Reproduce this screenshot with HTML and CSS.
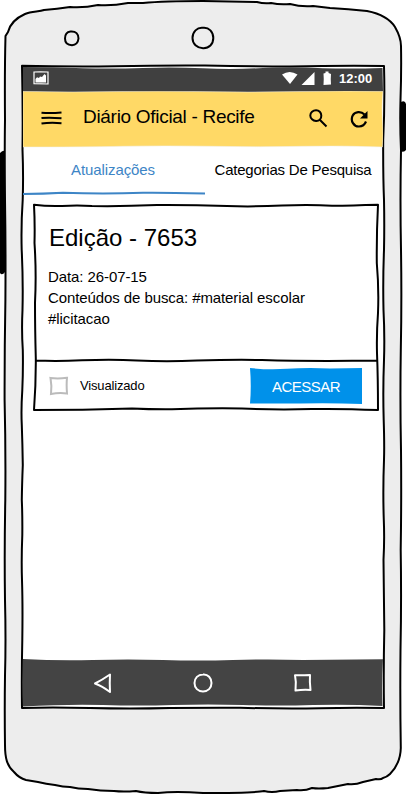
FILE: index.html
```html
<!DOCTYPE html>
<html lang="pt-BR">
<head>
<meta charset="utf-8">
<title>Diário Oficial - Recife</title>
<link rel="stylesheet" href="styles.css">
</head>
<body>
<div class="phone">
  <svg class="art" width="406" height="794" viewBox="0 0 406 794" aria-hidden="true">
    <path d="M0 153Q3 150 5 151V272Q2 276 0 273Z"/>
    <path d="M399 103Q405 99 406 104V150Q404 153 400 151Z"/>
    <path class="body" d="M5.500 36L8 32C10 24 16 18 25 14C32 11 39 12 44 10Q57 9 70 7Q84 8 98 5Q112 6 128 3L143 3Q164 1 203 1L257 2Q264 4 271 3Q280 5 290 4Q301 7 313 6L330 8Q348 9 367 11C382 14 390 19 395 27C399 34 401 39 401 46Q401.500 70 400.500 100Q399.800 125 401 150Q400 200 401 250Q401.800 300 400.800 350Q400 400 401 450Q401.500 500 400.700 550Q401.500 600 400.500 650Q400 700 400.800 748C400.500 761 396 768 390 774Q387 777 383 778Q381 780 376 779L363 782Q355 785 348 784L328 788Q318 789 312 788Q305 791 297 790L280 791Q272 793 264 791Q255 793 203 793Q175 791 158 793Q144 793 136 791Q123 792 114 791Q100 791 88 789Q78 789 70 787Q63 787 55 785Q46 784 38 782L26 780Q19 778 14 772C7 766 5 758 5 745Q4.500 710 5 676Q6 640 5 600Q4.300 550 5.300 500Q5.800 450 4.600 400Q4.500 350 5.400 300Q5.800 250 5 200Q4.500 150 5 120Q4.600 70 5.500 36Z"/>
    <path class="ring" d="M70.500 31.500C76 31 78.500 34 78.500 38.500C78 43 76 45 72 45.200C67 45 65 43 65 38.500C65 35 66.500 32 70.500 31.500Z"/>
    <path class="ring" d="M203 27.700C209 27 213.300 32 213.300 38S209 48.500 203 48.200S192.500 44 192.500 38S197 27 203 27.700Z"/>
    <path class="glass" d="M22 65.800Q65 66.800 115 66.300Q160 65.200 205 65.500Q250 66.500 290 66.500Q340 65.500 384 66Q385 103 383.200 140Q383 175 384 200Q384.500 225 384 250Q382.800 280 383.500 310Q384.800 335 384 360Q382.800 390 383.700 420Q384.500 445 384 460Q382.800 490 383.800 520Q384.600 540 383.500 560Q384 600 384.300 630Q383.400 670 384 708Q350 707.300 320 708.300Q280 709 240 707.700Q205 707.500 170 708Q130 709 90 708Q50 707 22 708Q21.500 675 22.300 640Q22.800 605 22 580Q21.300 560 22.300 535Q22.500 515 21.800 500Q22 485 22.800 465Q22.500 445 21.800 425Q21 410 22.300 390Q23.200 370 22.800 350Q21.500 330 22.500 310Q23.200 280 21.700 250Q21 225 22.700 200Q23.500 175 22.500 150Q23 110 22 65.800Z"/>
  </svg>
  <main class="screen">
    <div class="status">
      <svg class="edge" width="361" height="25" viewBox="0 0 361 25"><path fill="#404040" d="M0 0Q30 0 60 1.300Q90 2 120 1T180 1.300T240 1T300 1.300Q330 2 359.500 1L360 25H0Z"/></svg>
      <svg class="photo" width="16" height="14" viewBox="0 0 16 14"><path fill="none" stroke="#fff" stroke-width="1.200" d="M1 1Q7 .7 15 1V13L1 12.700Z"/><path fill="#fff" d="M2.500 11.500V8L4 6.300L6 7L7 5.500L9 6L11.500 3L13 4.500V11.500Z"/></svg>
      <svg class="signals" width="52" height="15" viewBox="0 0 52 15" fill="#fff"><path d="M0 3.500Q7.500-1.500 15.500 3.500L8 13Z"/><path d="M19.500 14L32.500 1V14Z"/><path d="M41.500 2.500L43.500 2V.500H46.500V2L49 3Q48.500 8 49 13.500L41.500 14Q42 8 41.500 2.500Z"/></svg>
      <span class="clock">12:00</span>
    </div>
    <header class="bar">
      <svg class="edge" width="360" height="57" viewBox="0 0 360 57"><path fill="#ffd966" stroke="#eee" stroke-width=".5" d="M0 .300Q45 1.500 90 .600T180 .600T270 .600T360 .300Q358.500 16 359.500 30T359.500 56Q320 54.500 280 55.300T190 55.300T100 55.300T0 56Z"/></svg>
      <svg class="menu" width="22" height="14" viewBox="0 0 22 14"><path d="M.500 1.800Q10 2.500 20.500 1.500M.500 7Q8 6.200 20.500 7.200M.500 12.600Q9 11.200 20.500 12.200"/></svg>
      <h1 class="title">Diário Oficial - Recife</h1>
      <svg class="search" width="19" height="19" viewBox="0 0 19 19"><path d="M12.300 6.500C12.500 10 10 12.200 7 12S1.300 9.500 1.300 6.500S4 1.300 7 1.200S12.300 3.500 12.300 6.500ZM11 11L17.500 17.500"/></svg>
      <svg class="reload" width="19" height="19" viewBox="0 0 19 19"><path fill="none" stroke="#000" stroke-width="2.200" d="M14.500 4.500C11 1 5 1.500 2.700 5.500C0 11 4 16.700 9 16.500Q14 16.500 16 11.500"/><path d="M17.500 1V8.500H10Z"/></svg>
    </header>
    <nav class="tabs">
      <a class="tab active">Atualizações<svg class="line" width="182" height="5" viewBox="0 0 182 5"><path d="M0 3Q20 2.800 40 1.700Q60 2.500 80 2.500Q100 2.500 120 1.800Q140 1.500 182 2.600"/></svg></a>
      <a class="tab second">Categorias De Pesquisa</a>
    </nav>
    <section class="card">
      <svg class="outline" width="349" height="210" viewBox="0 0 349 210"><path d="M2 1.700Q15 3.500 30 3Q45 2 60 3Q90 3.500 125 2Q160 1.800 195 3Q220 4 250 2.500Q280 1.500 300 2.800Q320 2.500 346 1.700Q344.500 30 344.800 60Q347 85 346 110Q344.500 130 345 150Q346 175 346 207Q310 205.500 280 206Q245 207 210 205.500Q175 205 140 206.300Q120 206.500 100 205.500Q50 207 2 207Q4 180 3.800 155Q3 125 3 100Q4.500 70 2.500 40Q3 20 2 1.700ZM3 157.500Q25 158.500 50 157.300Q80 156 105 157.500Q135 158.800 165 157.500Q200 156.500 230 157Q280 158.500 346 157.500"/></svg>
      <div class="content">
        <h2 class="heading">Edição - 7653</h2>
        <p class="text"><span class="date">Data: 26-07-15</span><br><span class="query">Conteúdos de busca: #material escolar</span><br><span class="tag">#licitacao</span></p>
      </div>
      <div class="actions">
        <svg class="check" width="20" height="20" viewBox="0 0 20 20"><path d="M1.500 2Q9 3 18 1.800Q17.300 8 18 17.500Q10 16.500 2 18Q3 10 1.500 2Z"/></svg>
        <span class="seen">Visualizado</span>
        <button class="open"><svg class="fill" width="112" height="36" viewBox="0 0 112 36"><path d="M0 0Q18 2 37 .800T80 .500L112 0V36Q80 34.800 50 35.500L0 35.500Q1.500 18 0 0Z"/></svg><span class="label">ACESSAR</span></button>
      </div>
    </section>
    <footer class="nav">
      <svg class="edge" width="361" height="49" viewBox="0 0 361 49"><path fill="#444" d="M0 0Q35 2 70 1T140 1T210 1T280 1L360 .300Q358.500 25 359.500 47Q325 45 290 46T220 46T150 46T80 46T0 47.500Z"/></svg>
      <svg class="key" width="20" height="22" viewBox="0 0 20 22"><path d="M2 11.500Q9 8 17 2.500Q16.500 11 17 20Q9 14 2 11.500Z"/></svg>
      <svg class="key" width="22" height="22" viewBox="0 0 22 22"><path d="M11 2.500C16 2 19.500 6 19.500 11S16 19.500 11 19.500S2.500 16 2.500 11S6 2.500 11 2.500Z"/></svg>
      <svg class="key" width="20" height="20" viewBox="0 0 20 20"><path d="M2 2.300Q9 2.500 17 2Q16.500 9 17.500 17Q10 16.500 2.500 17.500Q3.500 9 2 2.300Z"/></svg>
    </footer>
  </main>
</div>
</body>
</html>
```
FILE: styles.css
```css
* { box-sizing: border-box; margin: 0; padding: 0; }
body { background: #fff; overflow: hidden; font-family: "Liberation Sans", Arial, sans-serif; color: #000; }
.phone { position: relative; width: 406px; height: 794px; padding: 67px 22px 87px 23px; }
.art { position: absolute; inset: 0; }
.body, .glass, .ring { fill: #ededed; stroke: #000; stroke-width: 2; stroke-linejoin: round; }
.glass { fill: #fff; }
.screen { position: relative; width: 361px; height: 640px; display: flex; flex-direction: column; }
.status { position: relative; height: 24px; display: flex; align-items: center; color: #fff; }
.photo { position: relative; margin: -2px 0 0 10px; }
.signals { position: relative; margin: -1px 0 0 233px; }
.clock { position: relative; margin: -1px 0 0 5px; font-size: 13px; font-weight: bold; }
.bar { position: relative; height: 57px; display: flex; align-items: center; }
.edge { position: absolute; left: 0; top: 0; }
.menu, .title, .search, .reload, .key { position: relative; }
.menu { margin: -4px 0 0 18px; }
.menu path, .search path { fill: none; stroke: #000; stroke-width: 2; }
.title { margin: -6px 0 0 20px; width: 202px; font-size: 19px; letter-spacing: -.3px; font-weight: normal; white-space: nowrap; line-height: 24px; }
.search { margin: -2px 0 0 24px; }
.reload { margin: 0 0 0 22px; }
.tabs { height: 45px; display: flex; font-size: 15px; }
.tab { position: relative; height: 45px; line-height: 44px; width: 180px; text-align: center; white-space: nowrap; }
.active { color: #3d85c6; letter-spacing: -.08px; }
.second { letter-spacing: -.22px; }
.line { position: absolute; left: 0; bottom: -3px; }
.line path { fill: none; stroke: #3d85c6; stroke-width: 2; }
.card { position: relative; width: 349px; height: 210px; margin: 10px 0 0 9px; }
.outline { position: absolute; left: 0; top: 0; }
.outline path { fill: none; stroke: #000; stroke-width: 2; stroke-linejoin: round; }
.content { height: 158px; padding: 20px 0 0 16px; }
.heading { padding-left: 1px; font-size: 24px; line-height: 30px; font-weight: normal; }
.text { margin-top: 13px; font-size: 15px; line-height: 21px; letter-spacing: -.09px; }
.actions { height: 50px; display: flex; align-items: center; }
.check { margin-left: 17px; }
.check path { fill: none; stroke: #bbb; stroke-width: 2; }
.seen { margin: -1px 0 0 11px; width: 105px; font-size: 13px; letter-spacing: -.16px; }
.open { position: relative; margin-left: 65px; width: 112px; height: 36px; border: 0; background: none; color: #fff; font: 15px "Liberation Sans", Arial, sans-serif; letter-spacing: -.55px; }
.fill { position: absolute; left: 0; top: 0; }
.fill path { fill: #0091ea; }
.label { position: relative; }
.nav { position: relative; margin-top: auto; height: 48px; display: flex; align-items: center; padding-left: 70px; gap: 79px; }
.key path { fill: none; stroke: #fff; stroke-width: 2; stroke-linejoin: round; }
```
